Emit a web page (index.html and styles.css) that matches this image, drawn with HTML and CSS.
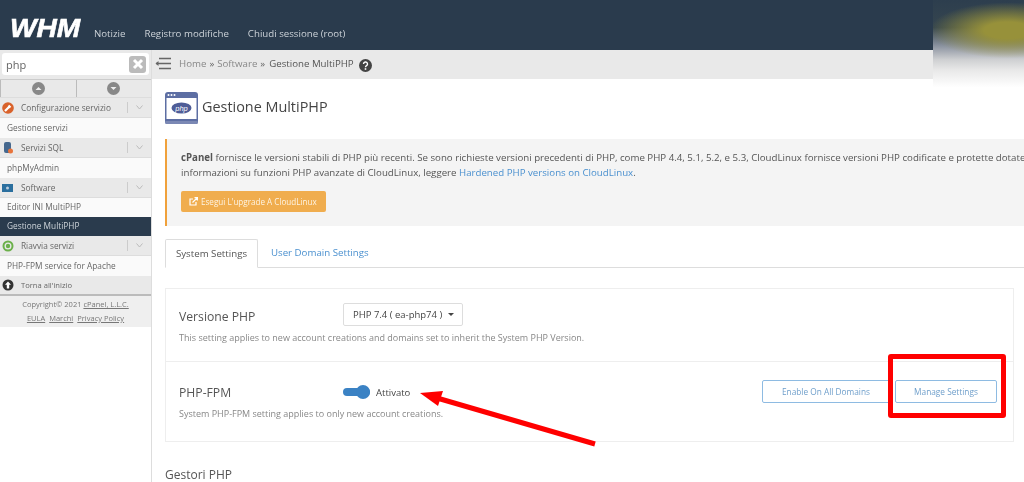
FILE: index.html
```html
<!DOCTYPE html>
<html lang="it">
<head>
<meta charset="utf-8">
<title>WHM - Gestione MultiPHP</title>
<link rel="stylesheet" href="styles.css">
</head>
<body>
<div class="page">
  <header class="topbar">
    <div class="logo"><span class="logo-text">WHM</span></div>
    <nav class="topnav"><a>Notizie</a><a>Registro modifiche</a><a>Chiudi sessione (root)</a></nav>
  </header>
  <div class="body">
    <aside class="sidebar">
      <div class="search">
        <div class="search-box"><span>php</span>
          <span class="clear"><svg width="12" height="12" viewBox="0 0 12 12"><path d="M2 2l8 8M10 2l-8 8" stroke="#fff" stroke-width="3"/></svg></span>
        </div>
      </div>
      <div class="arrows">
        <div class="arrow"><svg width="13" height="13" viewBox="0 0 13 13"><circle cx="6.5" cy="6.5" r="6.5" fill="#888"/><path d="M3.5 8l3-3 3 3z" fill="#eee"/></svg></div>
        <div class="arrow"><svg width="13" height="13" viewBox="0 0 13 13"><circle cx="6.5" cy="6.5" r="6.5" fill="#888"/><path d="M3.5 5l3 3 3-3z" fill="#eee"/></svg></div>
      </div>
      <div class="cat">
        <svg class="cat-icon" width="12" height="12" viewBox="0 0 12 12"><circle cx="6" cy="6" r="5.800" fill="#d9622b"/><path d="M3 9l4-4M6.500 3.500l2 2" stroke="#fff" stroke-width="2.200"/></svg>
        <span class="cat-name">Configurazione servizio</span><span class="chev"><svg width="7" height="5" viewBox="0 0 7 5"><path d="M.5.500l3 3.500 3-3.500" fill="none" stroke="#bbb"/></svg></span>
      </div>
      <div class="item">Gestione servizi</div>
      <div class="cat">
        <svg class="cat-icon" width="12" height="12" viewBox="0 0 12 12"><rect x="2" y="0" width="7" height="11" rx="2" fill="#45688e"/><circle cx="8.500" cy="9" r="2.500" fill="#e8743b"/></svg>
        <span class="cat-name">Servizi SQL</span><span class="chev"><svg width="7" height="5" viewBox="0 0 7 5"><path d="M.5.500l3 3.500 3-3.500" fill="none" stroke="#bbb"/></svg></span>
      </div>
      <div class="item">phpMyAdmin</div>
      <div class="cat">
        <svg class="cat-icon" width="12" height="12" viewBox="0 0 12 12"><rect x="0" y="2" width="11" height="8" fill="#2b6f9e"/><circle cx="5.500" cy="6" r="1.500" fill="#bcd"/></svg>
        <span class="cat-name">Software</span><span class="chev"><svg width="7" height="5" viewBox="0 0 7 5"><path d="M.5.500l3 3.500 3-3.500" fill="none" stroke="#bbb"/></svg></span>
      </div>
      <div class="item item-short">Editor INI MultiPHP</div>
      <div class="item item-short active">Gestione MultiPHP</div>
      <div class="cat">
        <svg class="cat-icon" width="12" height="12" viewBox="0 0 12 12"><circle cx="6" cy="6" r="4.500" fill="none" stroke="#6bb04a" stroke-width="2"/><circle cx="6" cy="6" r="2.200" fill="#6bb04a"/></svg>
        <span class="cat-name">Riavvia servizi</span><span class="chev"><svg width="7" height="5" viewBox="0 0 7 5"><path d="M.5.500l3 3.500 3-3.500" fill="none" stroke="#bbb"/></svg></span>
      </div>
      <div class="item">PHP-FPM service for Apache</div>
      <div class="cat top-link">
        <svg class="cat-icon" width="12" height="12" viewBox="0 0 12 12"><circle cx="6" cy="6" r="5.500" fill="#333"/><path d="M6 2.500l3 3.200H7.200V9.500H4.800V5.700H3z" fill="#fff"/></svg>
        <span class="cat-name">Torna all'inizio</span>
      </div>
      <div class="copy">
        <div>Copyright© 2021 <u>cPanel, L.L.C.</u></div>
        <div class="copy-links"><u>EULA</u><u>Marchi</u><u>Privacy Policy</u></div>
      </div>
    </aside>
    <main class="main">
      <div class="crumbs">
        <svg class="menu-icon" width="16" height="13" viewBox="0 0 16 13"><path d="M4 1.500h12M1 6.500h15M4 11.500h12" stroke="#666" stroke-width="1.600" fill="none"/><path d="M3.500 4l-3 2.500 3 2.500" fill="#666"/></svg>
        <span class="crumb">Home</span><b>»</b><span class="crumb">Software</span><b>»</b><span class="crumb-now">Gestione MultiPHP</span>
        <svg class="help" width="13" height="13" viewBox="0 0 13 13"><circle cx="6.500" cy="6.500" r="6.500" fill="#444"/><path d="M4.500 5a2 2 0 1 1 3 1.700c-.7.400-1 .8-1 1.500" fill="none" stroke="#fff" stroke-width="1.400"/><rect x="5.700" y="9.200" width="1.600" height="1.600" fill="#fff"/></svg>
      </div>
      <div class="content">
        <div class="title-row">
          <svg class="php-icon" width="33" height="32" viewBox="0 0 33 32"><rect width="33" height="32" rx="3" fill="#5d6ea3"/><rect x="1.500" y="6" width="30" height="21" fill="#fff"/><rect x="0" y="29" width="33" height="3" rx="1.500" fill="#7b88b4"/><circle cx="3.500" cy="3" r="1" fill="#fff"/><circle cx="6.500" cy="3" r="1" fill="#fff"/><circle cx="9.500" cy="3" r="1" fill="#fff"/><ellipse cx="16.500" cy="16" rx="10" ry="5.500" fill="#4f5d97"/><text x="16.500" y="18.500" font-size="7.500" font-style="italic" font-family="Liberation Sans, sans-serif" text-anchor="middle" fill="#fff">php</text></svg>
          <h1>Gestione MultiPHP</h1>
        </div>
        <div class="alert">
          <p><strong>cPanel</strong> fornisce le versioni stabili di PHP più recenti. Se sono richieste versioni precedenti di PHP, come PHP 4.4, 5.1, 5.2, e 5.3, CloudLinux fornisce versioni PHP codificate e protette dotate</p>
          <p>informazioni su funzioni PHP avanzate di CloudLinux, leggere <a>Hardened PHP versions on CloudLinux</a>.</p>
          <button class="upgrade"><svg width="9" height="9" viewBox="0 0 9 9"><path d="M7 5v3H1V2h3" fill="none" stroke="#fff" stroke-width="1.200"/><path d="M3.500 5.500L8 1M5.500 .6H8.400V3.500" fill="none" stroke="#fff" stroke-width="1.200"/></svg>Esegui L'upgrade A CloudLinux</button>
        </div>
        <div class="tabs"><div class="tab tab-on">System Settings</div><div class="tab">User Domain Settings</div></div>
        <section class="panel">
          <div class="row row-php">
            <div class="row-head"><h2>Versione PHP</h2><div class="select">PHP 7.4 ( ea-php74 )<i class="caret"></i></div></div>
            <p class="hint">This setting applies to new account creations and domains set to inherit the System PHP Version.</p>
          </div>
          <div class="row row-fpm">
            <div class="fpm-left">
              <div class="row-head"><h2>PHP-FPM</h2><div class="toggle"><span class="track"><span class="knob"></span></span><span>Attivato</span></div></div>
              <p class="hint">System PHP-FPM setting applies to only new account creations.</p>
            </div>
            <div class="actions"><button class="btn btn-wide">Enable On All Domains</button><button class="btn">Manage Settings</button></div>
          </div>
        </section>
        <h3>Gestori PHP</h3>
      </div>
    </main>
  </div>
  <div class="smudge"></div>
  <div class="red-box"></div>
  <svg class="red-arrow" width="190" height="70" viewBox="0 0 190 70"><path d="M177 60L19 14" stroke="#f00" stroke-width="5" fill="none"/><path d="M2 9L25 7 20 22z" fill="#f00"/></svg>
</div>
</body>
</html>
```
FILE: styles.css
```css
* { box-sizing: border-box; }
html, body { margin: 0; padding: 0; background: #fff; }
body { font-family: "Open Sans", sans-serif; color: #555; }
.page { position: relative; width: 1024px; height: 482px; overflow: hidden; filter: blur(0.35px); }

.topbar { height: 50px; background: #2a3b4d; display: flex; align-items: flex-end; }
.logo { width: 94px; padding-left: 10px; height: 36px; color: #fff; font: italic 700 26px/28px "Liberation Sans", sans-serif; }
.logo-text { display: inline-block; transform: scaleX(1.08); transform-origin: left; -webkit-text-stroke: 0.6px #fff; }
.topnav { display: flex; gap: 19px; height: 25px; font-size: 9.700px; line-height: 18px; color: #ccd2d8; }

.body { display: flex; height: 432px; }
.sidebar { width: 152px; flex: none; border-right: 1px solid #ddd; font-size: 9px; height: 100%; }
.search { height: 29px; background: #e9e9e9; padding: 3px 2px 4px; }
.search-box { height: 22px; background: #fff; border-radius: 3px; display: flex; justify-content: space-between; align-items: center; padding: 0 3px 0 4px; font-size: 11px; color: #666; }
.clear { width: 17px; height: 17px; background: #bbb; border-radius: 3px; display: flex; align-items: center; justify-content: center; }
.arrows { display: flex; height: 19px; background: #e9e9e9; border-top: 1px solid #ccc; border-bottom: 1px solid #ddd; }
.arrow { flex: 1; display: flex; align-items: center; justify-content: center; border-left: 1px solid #bbb; }
.cat { height: 20px; background: #e9e9e9; display: flex; align-items: center; border-bottom: 1px solid #ddd; color: #666; font-size: 8.300px; }
.cat-icon { margin-left: 2px; flex: none; }
.cat-name { margin-left: 7px; flex: 1; white-space: nowrap; }
.chev { width: 24px; height: 11px; border-left: 1px solid #ccc; display: flex; align-items: center; justify-content: center; }
.item { height: 20px; padding-left: 7px; line-height: 19px; background: #fafafa; color: #666; font-size: 8.300px; white-space: nowrap; }
.item-short { height: 19px; line-height: 18px; }
.active { background: #2a3b4d; color: #ccd2d8; }
.top-link { border-bottom: 2px solid #bbb; }
.top-link .cat-name { font-size: 7.600px; }
.copy { height: 31px; background: #efefef; text-align: center; font-size: 7.500px; line-height: 14px; padding-top: 1px; color: #777; }
.copy-links { display: flex; justify-content: center; gap: 4px; }

.main { flex: 1; min-width: 0; overflow: hidden; }
.crumbs { height: 29px; background: #e9e9e9; display: flex; align-items: center; font-size: 9.700px; color: #888; white-space: nowrap; padding: 0 0 3px 3px; }
.menu-icon { margin-right: 8px; }
.crumbs b { margin: 0 3px; font-weight: 400; color: #666; }
.crumb-now { color: #555; margin-left: 1px; }
.help { margin-left: 5px; margin-top: 4px; }

.content { padding: 13px 0 0 13px; }
.title-row { display: flex; align-items: center; height: 32px; gap: 4px; }
h1 { margin: 0; font-size: 14.400px; font-weight: 400; color: #444; line-height: 30px; height: 32px; }
.alert { margin-top: 15px; height: 87px; width: 880px; background: #f4f4f4; border-left: 2px solid #f0a13b; padding: 12px 0 0 14px; font-size: 9.700px; color: #555; white-space: nowrap; }
.alert p { margin: 0; line-height: 14.500px; }
.alert strong { font-weight: 700; }
.alert a { color: #4a90cf; }
.upgrade { margin-top: 11px; display: flex; align-items: center; gap: 3px; height: 21px; width: 145px; padding: 0 0 0 8px; border: 0; border-radius: 2px; background: #f0ad4e; color: #fdf3e3; font: 8.100px "Open Sans", sans-serif; }
.tabs { margin-top: 13px; height: 29px; display: flex; border-bottom: 1px solid #ddd; width: 880px; }
.tab { padding: 0 13px; line-height: 28px; font-size: 9.700px; color: #4a90cf; }
.tab-on { color: #555; width: 93px; padding: 0; text-align: center; background: #fff; border: 1px solid #ddd; border-bottom-color: #fff; border-radius: 2px 2px 0 0; height: 29px; }
.panel { margin-top: 20px; width: 849px; height: 154px; border: 1px solid #eee; }
.row { padding: 0 16px 0 13px; }
.row-php { height: 73px; border-bottom: 1px solid #eee; padding-top: 14px; }
.row-fpm { height: 79px; padding-top: 19px; display: flex; justify-content: space-between; }
.row-head { display: flex; align-items: center; height: 22px; }
h2 { margin: 0; width: 164px; font-size: 12.200px; font-weight: 400; color: #555; }
.row-php h2 { padding-top: 4px; }
.select { display: flex; align-items: center; width: 120px; height: 23px; padding-left: 9px; border: 1px solid #ddd; border-radius: 2px; font-size: 9.500px; color: #444; }
.caret { margin-left: 6px; border: 3px solid transparent; border-top-color: #444; border-bottom-width: 0; }
.hint { margin: 7px 0 0; font-size: 9px; color: #888; line-height: 12px; }
.row-fpm .hint { margin-top: 5px; }
.toggle { display: flex; align-items: center; gap: 6px; font-size: 9.500px; color: #444; }
.track { display: block; position: relative; width: 27px; height: 8px; margin: 0; background: #3b82c4; border-radius: 4px; }
.knob { position: absolute; right: 0; top: -3px; width: 14px; height: 14px; background: #3b82c4; border-radius: 50%; }
.actions { display: flex; margin-top: -1px; height: 23px; }
.btn { width: 102px; height: 23px; background: #fff; border: 1px solid #8ebbe2; border-radius: 2px; color: #6f9fcb; font: 8.300px "Open Sans", sans-serif; padding: 0; }
.btn-wide { width: 128px; margin-right: 5px; }
h3 { margin: 24px 0 0; font-size: 12px; font-weight: 400; color: #555; }

.smudge { position: absolute; left: 933px; top: 0; width: 91px; height: 92px; background: radial-gradient(ellipse 78px 28px at 82% 33%, #97913a 30%, rgba(151,145,58,0) 100%), linear-gradient(to bottom, #2d3e4e 0, #35454f 30%, #8b93a0 50%, #cfd0d2 65%, #e8e8e8 76%, #fff 95%); }
.red-box { position: absolute; left: 888px; top: 354px; width: 118px; height: 64px; border: 5px solid #f00; border-radius: 3px; }
.red-arrow { position: absolute; left: 418px; top: 384px; }
```
